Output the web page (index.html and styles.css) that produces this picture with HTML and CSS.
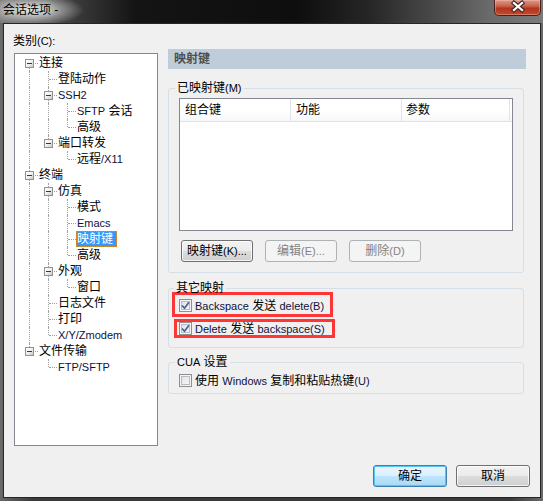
FILE: index.html
```html
<!DOCTYPE html>
<html>
<head>
<meta charset="utf-8">
<title>会话选项</title>
<link rel="stylesheet" href="styles.css">
</head>
<body>
<div class="window">
  <div class="titlebar">
    <span class="title">会话选项 -</span>
    <div class="close">
      <svg width="45" height="15" viewBox="0 0 45 15">
        <path d="M19 3 L27 10 M27 3 L19 10" stroke="#3a2a28" stroke-width="4.4" stroke-linecap="square" fill="none"/>
        <path d="M19 3 L27 10 M27 3 L19 10" stroke="#ffffff" stroke-width="2.3" stroke-linecap="square" fill="none"/>
      </svg>
    </div>
  </div>
  <div class="client">
    <div class="main">
      <div class="left">
        <div class="cat-label">类别<span class="en">(C):</span></div>
        <div class="tree">
          <div class="row"><span class="c first more"><i class="box"></i></span><span class="lbl">连接</span></div>
          <div class="row"><span class="g"></span><span class="c more"></span><span class="lbl">登陆动作</span></div>
          <div class="row"><span class="g"></span><span class="c more"><i class="box"></i></span><span class="lbl en">SSH2</span></div>
          <div class="row"><span class="g"></span><span class="g"></span><span class="c more"></span><span class="lbl"><span class="en">SFTP</span> 会话</span></div>
          <div class="row"><span class="g"></span><span class="g"></span><span class="c"></span><span class="lbl">高级</span></div>
          <div class="row"><span class="g"></span><span class="c"><i class="box"></i></span><span class="lbl">端口转发</span></div>
          <div class="row"><span class="g"></span><span class="e"></span><span class="c"></span><span class="lbl">远程<span class="en">/X11</span></span></div>
          <div class="row"><span class="c more"><i class="box"></i></span><span class="lbl">终端</span></div>
          <div class="row"><span class="g"></span><span class="c more"><i class="box"></i></span><span class="lbl">仿真</span></div>
          <div class="row"><span class="g"></span><span class="g"></span><span class="c more"></span><span class="lbl">模式</span></div>
          <div class="row"><span class="g"></span><span class="g"></span><span class="c more"></span><span class="lbl en">Emacs</span></div>
          <div class="row"><span class="g"></span><span class="g"></span><span class="c more"></span><span class="lbl selected">映射键</span></div>
          <div class="row"><span class="g"></span><span class="g"></span><span class="c"></span><span class="lbl">高级</span></div>
          <div class="row"><span class="g"></span><span class="c more"><i class="box"></i></span><span class="lbl">外观</span></div>
          <div class="row"><span class="g"></span><span class="g"></span><span class="c"></span><span class="lbl">窗口</span></div>
          <div class="row"><span class="g"></span><span class="c more"></span><span class="lbl">日志文件</span></div>
          <div class="row"><span class="g"></span><span class="c more"></span><span class="lbl">打印</span></div>
          <div class="row"><span class="g"></span><span class="c"></span><span class="lbl en">X/Y/Zmodem</span></div>
          <div class="row"><span class="c"><i class="box"></i></span><span class="lbl">文件传输</span></div>
          <div class="row"><span class="e"></span><span class="c"></span><span class="lbl en">FTP/SFTP</span></div>
        </div>
      </div>
      <div class="panel">
        <div class="panel-head">映射键</div>
        <fieldset class="group g1">
          <legend>已映射键<span class="en">(M)</span></legend>
          <div class="list">
            <div class="list-head">
              <div class="col col1">组合键</div>
              <div class="col col2">功能</div>
              <div class="col col3">参数</div>
            </div>
          </div>
          <div class="btn-row">
            <button class="btn">映射键<span class="en">(K)...</span></button>
            <button class="btn" disabled>编辑<span class="en">(E)...</span></button>
            <button class="btn" disabled>删除<span class="en">(D)</span></button>
          </div>
        </fieldset>
        <fieldset class="group g2">
          <legend>其它映射</legend>
          <div class="chk-row mark mark1">
            <span class="cb checked"><svg width="9" height="9" viewBox="0 0 9 9"><path d="M1 4.5 L3.5 7.2 L8 1.2" stroke="#4a5f97" stroke-width="1.7" fill="none"/></svg></span>
            <span class="chk-text"><span class="en">Backspace</span> 发送 <span class="en">delete(B)</span></span>
          </div>
          <div class="chk-row mark mark2">
            <span class="cb checked"><svg width="9" height="9" viewBox="0 0 9 9"><path d="M1 4.5 L3.5 7.2 L8 1.2" stroke="#4a5f97" stroke-width="1.7" fill="none"/></svg></span>
            <span class="chk-text"><span class="en">Delete</span> 发送 <span class="en">backspace(S)</span></span>
          </div>
        </fieldset>
        <fieldset class="group g3">
          <legend><span class="en">CUA</span> 设置</legend>
          <div class="chk-row cua">
            <span class="cb"></span>
            <span class="chk-text">使用 <span class="en">Windows</span> 复制和粘贴热键<span class="en">(U)</span></span>
          </div>
        </fieldset>
      </div>
    </div>
    <div class="footer">
      <button class="btn wide default">确定</button>
      <button class="btn wide">取消</button>
    </div>
  </div>
</div>
</body>
</html>
```

FILE: styles.css
```css
* { box-sizing: border-box; }

html, body {
  margin: 0;
  padding: 0;
  background: #4a4a4a;
}

body {
  font-family: "Liberation Sans", "Noto Sans CJK SC", sans-serif;
  font-size: 12px;
  color: #000;
}

.en {
  font-family: "Liberation Sans", sans-serif;
  font-size: 11px;
}

.window {
  width: 543px;
  height: 501px;
  padding: 0 2px 3px 3px;
  background: linear-gradient(90deg, #6a6a6a 0%, #3a3a3a 6%, #3a3a3a 94%, #6a6a6a 100%);
  overflow: hidden;
}

.titlebar {
  height: 23px;
  margin: 0 -2px 0 -3px;
  padding-left: 3px;
  display: flex;
  align-items: flex-start;
  background:
    radial-gradient(ellipse 52px 16px at 32px 10px, rgba(235,235,235,0.95) 0%, rgba(190,190,190,0.75) 45%, rgba(120,120,120,0) 100%),
    linear-gradient(90deg, #777 0%, #3a3a3a 14%, #141414 25%, #0e0e0e 55%, #262626 68%, #4a4a4a 80%, #6a6a6a 90%, #7a7a7a 100%);
}

.title {
  margin-top: 3px;
  line-height: 14px;
  font-size: 12px;
  color: #000;
  white-space: nowrap;
  text-shadow: 0 0 6px rgba(255,255,255,0.8);
}

.close {
  margin-left: auto;
  margin-right: 2px;
  width: 47px;
  height: 16px;
  border: 1px solid #4a2018;
  border-top: 0;
  border-radius: 0 0 5px 5px;
  background: linear-gradient(#dc9a88 0%, #c9634c 40%, #b2351d 55%, #c04a2c 100%);
  box-shadow: inset 0 0 0 1px rgba(255,210,200,0.35);
  display: flex;
  align-items: flex-start;
  justify-content: center;
}

.close svg { display: block; }

.client {
  width: 538px;
  height: 475px;
  border: 1px solid #262626;
  background: #f0f0f0;
  padding: 10px 10px 10px 10px;
  display: flex;
  flex-direction: column;
}

.main {
  display: grid;
  grid-template-columns: 144px 358px;
  column-gap: 10px;
  align-items: start;
}

.cat-label {
  margin-left: -1px;
  line-height: 14px;
  height: 14px;
  white-space: nowrap;
}

.tree {
  margin-top: 5px;
  width: 144px;
  height: 393px;
  border: 1px solid #828790;
  background: #fff;
  padding: 1px 0 0 5px;
}

.row {
  display: flex;
  height: 16px;
  align-items: center;
}

.g, .c, .e {
  position: relative;
  flex: none;
  width: 19px;
  height: 16px;
}

.g::before {
  content: "";
  position: absolute;
  left: 9px;
  top: 0;
  height: 16px;
  border-left: 1px dotted #a0a0a0;
}

.c::before {
  content: "";
  position: absolute;
  left: 9px;
  top: 0;
  height: 8px;
  border-left: 1px dotted #a0a0a0;
}

.c.more::before { height: 16px; }
.c.first::before { top: 8px; height: 8px; }

.c::after {
  content: "";
  position: absolute;
  left: 10px;
  top: 8px;
  width: 8px;
  border-top: 1px dotted #a0a0a0;
}

.box {
  position: absolute;
  z-index: 1;
  left: 5px;
  top: 4px;
  width: 9px;
  height: 9px;
  border: 1px solid #919191;
  background: linear-gradient(135deg, #ffffff 0%, #f0f0f0 50%, #c8c8c8 100%);
}

.box::after {
  content: "";
  position: absolute;
  left: 1px;
  top: 3px;
  width: 5px;
  height: 1px;
  background: #1f3680;
}

.lbl {
  margin-left: -1px;
  padding-right: 3px;
  line-height: 14px;
  height: 16px;
  border: 1px solid transparent;
  white-space: nowrap;
}

.lbl.en { font-size: 11px; color: #101040; }
.lbl .en { color: #101040; }

.lbl.selected {
  background: #3399ff;
  color: #fff;
  border: 1px dotted #d4913c;
}

.panel {
  margin-top: 15px;
  width: 358px;
}

.panel-head {
  height: 20px;
  line-height: 20px;
  padding-left: 6px;
  background: #bfcddb;
  color: #4d4d4d;
  font-weight: bold;
}

.group {
  margin: 0;
  width: 356px;
  border: 1px solid #d5dfe5;
  border-radius: 3px;
  min-width: 0;
}

.group legend {
  line-height: 14px;
  padding: 0 2px;
  white-space: nowrap;
}

.g1 {
  margin-top: 12px;
  padding: 3px 10px 10px 10px;
}
.g1 legend { margin-left: -4px; }

.list {
  width: 334px;
  height: 133px;
  border: 1px solid #828790;
  background: #fff;
}

.list-head {
  display: flex;
  height: 23px;
  border-bottom: 1px solid #e2e2e2;
  background: linear-gradient(#ffffff 0%, #ffffff 55%, #f6f7f9 100%);
}

.col {
  height: 22px;
  line-height: 22px;
  padding-left: 5px;
  border-right: 1px solid #e2e3ea;
}
.col1 { width: 111px; }
.col2 { width: 111px; }
.col3 { width: 108px; padding-left: 4px; }

.btn-row {
  display: flex;
  gap: 12px;
  margin-top: 9px;
  padding-left: 2px;
}

.btn {
  width: 72px;
  height: 22px;
  padding: 0;
  border: 1px solid #707070;
  border-radius: 3px;
  background: linear-gradient(#f2f2f2 0%, #ebebeb 50%, #dddddd 50%, #cfcfcf 100%);
  box-shadow: inset 0 0 0 1px rgba(255,255,255,0.75);
  font-family: "Liberation Sans", "Noto Sans CJK SC", sans-serif;
  font-size: 12px;
  line-height: 18px;
  color: #000;
  white-space: nowrap;
}

.btn:disabled {
  border-color: #adb2b5;
  background: #f4f4f4;
  box-shadow: none;
  color: #838383;
}

.g2 {
  margin-top: 8px;
  padding: 0 3px 9px 3px;
}
.g2 legend { margin-left: 2px; }

.chk-row {
  display: flex;
  align-items: center;
  white-space: nowrap;
}

.mark {
  width: 161px;
  border: 3px solid #ff3636;
}

.mark1 {
  margin-top: -3px;
  height: 25px;
  padding: 2px 0 0 4px;
}

.mark2 {
  margin-top: 2px;
  margin-left: 2px;
  height: 19px;
  padding-left: 2px;
}

.cb {
  flex: none;
  width: 13px;
  height: 13px;
  border: 1px solid #8e8f8f;
  background: linear-gradient(135deg, #d6d9de 0%, #eceef1 50%, #fbfbfb 100%);
  box-shadow: inset 0 0 0 1px #f4f4f4, inset 0 0 0 2px #b9bdc3;
  display: flex;
  align-items: center;
  justify-content: center;
}

.cb svg { display: block; }

.chk-text {
  margin-left: 3px;
  line-height: 14px;
}

.chk-text .en { color: #101040; }

.g3 {
  margin-top: 7px;
  padding: 3px 10px 4px 10px;
}
.g3 legend { margin-left: -4px; }

.cua { height: 17px; }

.footer {
  margin-top: 19px;
  display: flex;
  justify-content: flex-end;
  gap: 9px;
  padding-right: 0;
}

.btn.wide { width: 74px; }

.btn.default {
  border-color: #3c7fb1;
  background: linear-gradient(#eaf6fd 0%, #d9f0fc 50%, #bee6fd 50%, #a7d9f5 100%);
  box-shadow: inset 0 0 0 1px #54c6f8;
}
```
